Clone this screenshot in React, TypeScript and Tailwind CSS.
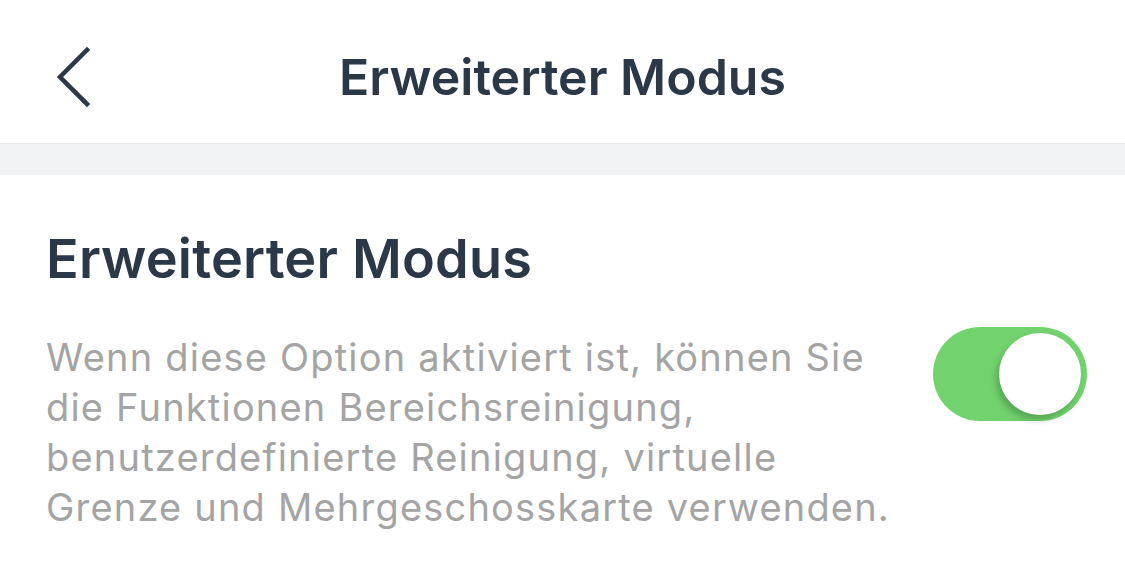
import React from "react";

const Toggle: React.FC<{ on: boolean }> = ({ on }) => (
  <div
    className={`w-[154px] h-[94px] rounded-full p-[6px] flex shrink-0 ${
      on ? "bg-[#72d36e] justify-end" : "bg-[#e5e5ea] justify-start"
    }`}
  >
    <div className="w-[82px] h-[82px] rounded-full bg-white shadow-[-3px_5px_6px_rgba(40,90,40,0.35)]" />
  </div>
);

export default function App() {
  const [on] = React.useState(true);

  return (
    <div className="w-[1125px] h-[566px] bg-white font-['Inter','Noto_Sans',sans-serif] overflow-hidden">
      <div className="h-[143px] grid grid-cols-[1fr_auto_1fr] items-center">
        <div className="pl-[55px] pt-[11px] flex items-center">
          <svg width="35" height="62" viewBox="0 0 35 62" fill="none">
            <path d="M32 4 L5 31 L32 58" stroke="#2a3847" strokeWidth="4.5" strokeLinecap="square" strokeLinejoin="miter" />
          </svg>
        </div>
        <h1 className="text-[50px] leading-none font-semibold text-[#2a3847] pt-[10px]">
          Erweiterter Modus
        </h1>
        <div />
      </div>
      <div className="h-[32px] bg-[#f2f3f6] border-t border-[#e8e9ec]" />
      <div className="pl-[46px] pr-[38px] pt-[57px]">
        <h2 className="text-[54px] leading-none font-semibold text-[#2a3847] tracking-[0.2px]">
          Erweiterter Modus
        </h2>
        <div className="flex items-start justify-between mt-[41px]">
          <p className="text-[38px] leading-[50px] tracking-[1.2px] text-[#a4a4a4] mt-[5px]">
            Wenn diese Option aktiviert ist, können Sie
            <br />
            die Funktionen Bereichsreinigung,
            <br />
            benutzerdefinierte Reinigung, virtuelle
            <br />
            Grenze und Mehrgeschosskarte verwenden.
          </p>
          <Toggle on={on} />
        </div>
      </div>
    </div>
  );
}
